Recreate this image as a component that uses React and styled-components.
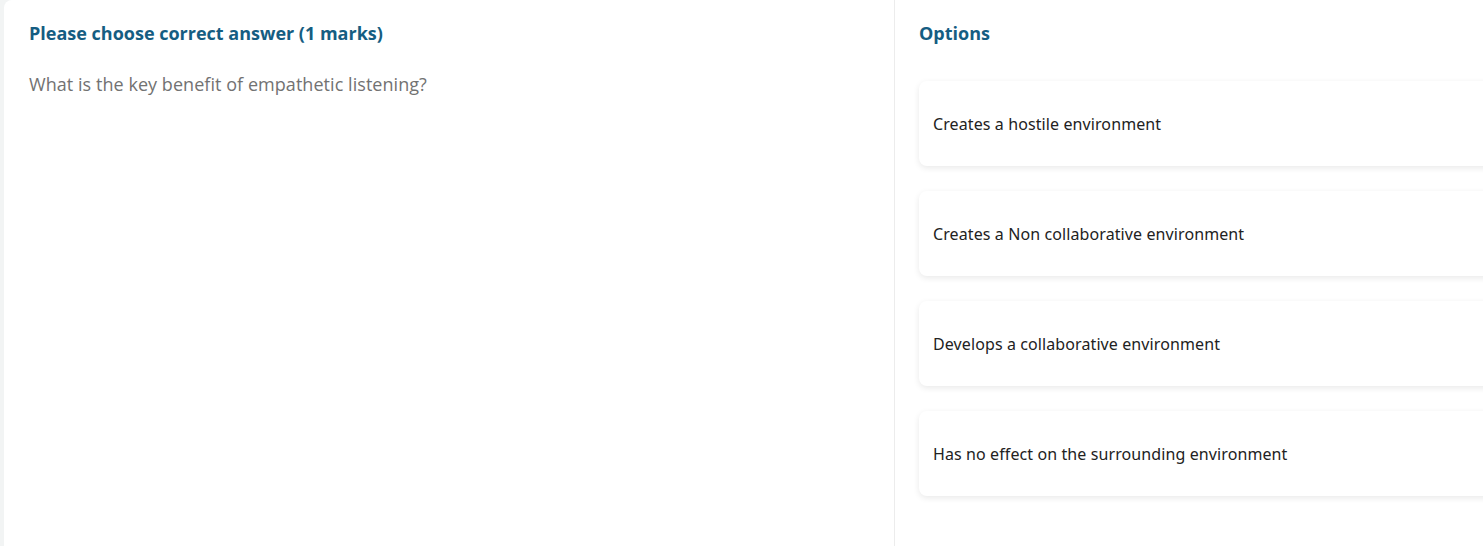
import React from 'react'
import styled, { createGlobalStyle } from 'styled-components'

const options = [
	'Creates a hostile environment',
	'Creates a Non collaborative environment',
	'Develops a collaborative environment',
	'Has no effect on the surrounding environment'
]

const GlobalStyle = createGlobalStyle`
	html, body {
		margin: 0;
		padding: 0;
		background: #f2f4f4;
		overflow: hidden;
	}
	body {
		font-family: 'Open Sans', 'Noto Sans', sans-serif;
	}
`

const Page = styled.div`
	display: flex;
	width: 1540px;
	height: 546px;
	padding-left: 4px;
	box-sizing: border-box;
`

const Card = styled.div`
	display: grid;
	grid-template-columns: 891px 1fr;
	flex: 1;
	background: #fff;
	border-top-left-radius: 8px;
`

const Question = styled.section`
	padding: 22px 25px;
	border-right: 1px solid #ececec;
`

const Options = styled.section`
	padding: 22px 24px 0 24px;
`

const Heading = styled.h2`
	margin: 0;
	font-size: 18px;
	font-weight: 700;
	color: #155d82;
	line-height: 22px;
`

const Prompt = styled.p`
	margin: 28px 0 0;
	font-size: 18px;
	font-weight: 400;
	color: #727272;
	line-height: 24px;
	letter-spacing: 0.05px;
`

const List = styled.div`
	display: flex;
	flex-direction: column;
	gap: 25px;
	margin-top: 37px;
`

const Option = styled.div`
	height: 85px;
	display: flex;
	align-items: center;
	padding: 0 14px;
	background: #fff;
	border-radius: 8px;
	box-shadow: 0 2px 6px rgba(0, 0, 0, 0.09);
	font-family: 'Noto Sans', sans-serif;
	font-size: 16px;
	letter-spacing: 0.1px;
	color: #222;
`

export default function App() {
	return (
		<>
			<GlobalStyle />
			<Page>
				<Card>
					<Question>
						<Heading>Please choose correct answer (1 marks)</Heading>
						<Prompt>What is the key benefit of empathetic listening?</Prompt>
					</Question>
					<Options>
						<Heading>Options</Heading>
						<List>
							{options.map((o) => (
								<Option key={o}>{o}</Option>
							))}
						</List>
					</Options>
				</Card>
			</Page>
		</>
	)
}
